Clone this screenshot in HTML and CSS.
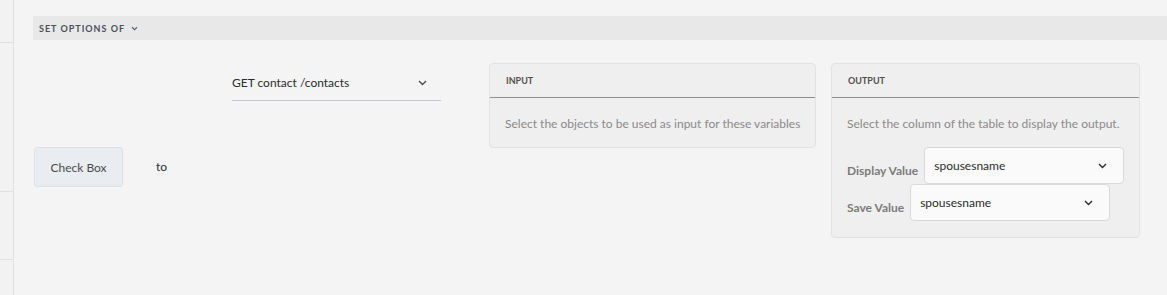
FILE: index.html
```html
<!DOCTYPE html>
<html lang="en">
<head>
    <meta charset="UTF-8">
    <title>Set Options</title>
    <link rel="stylesheet" href="styles.css">
</head>
<body>

<div class="page">
    <div class="rail">
        <div class="rail-item r1"></div>
        <div class="rail-item r2"></div>
        <div class="rail-item r3"></div>
    </div>

    <div class="main">
        <div class="section-bar">
            <span class="section-title">SET OPTIONS OF</span>
            <svg class="chev-sm" width="7" height="5" viewBox="0 0 7 5"><path d="M1 1.2 L3.5 3.6 L6 1.2" fill="none" stroke="#5a6270" stroke-width="1.2"/></svg>
        </div>

        <div class="options-row">
            <div class="target">
                <button class="field-btn">Check Box</button>
                <span class="to">to</span>
            </div>

            <div class="service">
                <div class="line-select">
                    <span>GET contact /contacts</span>
                    <svg width="9" height="6" viewBox="0 0 9 6"><path d="M1 1 L4.5 4.5 L8 1" fill="none" stroke="#4b4b4b" stroke-width="1.4"/></svg>
                </div>
            </div>

            <div class="panel panel-input">
                <div class="panel-head">INPUT</div>
                <div class="panel-body">
                    <p class="hint">Select the objects to be used as input for these variables</p>
                </div>
            </div>

            <div class="panel panel-output">
                <div class="panel-head">OUTPUT</div>
                <div class="panel-body">
                    <p class="hint">Select the column of the table to display the output.</p>
                    <div class="field">
                        <label>Display Value</label>
                        <div class="box-select">
                            <span>spousesname</span>
                            <svg width="9" height="6" viewBox="0 0 9 6"><path d="M1 1 L4.5 4.5 L8 1" fill="none" stroke="#2c2c2c" stroke-width="1.4"/></svg>
                        </div>
                    </div>
                    <div class="field">
                        <label>Save Value</label>
                        <div class="box-select">
                            <span>spousesname</span>
                            <svg width="9" height="6" viewBox="0 0 9 6"><path d="M1 1 L4.5 4.5 L8 1" fill="none" stroke="#2c2c2c" stroke-width="1.4"/></svg>
                        </div>
                    </div>
                </div>
            </div>
        </div>
    </div>
</div>

</body>
</html>
```

FILE: styles.css
```css
body {
    margin: 0;
    padding: 0;
    background-color: #f4f4f4;
    font-family: "Lato", "Open Sans", sans-serif;
    color: #2c2c2c;
}
.page {
    display: flex;
    height: 295px;
    overflow: hidden;
}
.rail {
    width: 13px;
    flex-shrink: 0;
    border-right: 1px solid #e1e1e1;
    background-color: #f2f2f2;
}
.rail-item {
    border-bottom: 1px solid #e0e0e0;
}
.r1 { height: 42px; }
.r2 { height: 148px; }
.r3 { height: 67px; }
.main {
    flex: 1;
    padding: 16px 0 0 19px;
}
.section-bar {
    height: 24px;
    background-color: #e8e8e8;
    display: flex;
    align-items: center;
    padding-left: 6px;
}
.section-title {
    font-size: 9px;
    font-weight: bold;
    letter-spacing: 1px;
    color: #4a505c;
}
.chev-sm {
    margin-left: 6px;
}
.options-row {
    display: flex;
    align-items: flex-start;
    padding-top: 23px;
    padding-left: 1px;
}
.target {
    display: flex;
    align-items: center;
    margin-top: 84px;
    width: 198px;
    flex-shrink: 0;
}
.field-btn {
    width: 89px;
    height: 40px;
    font-family: inherit;
    font-size: 12px;
    color: #4b4b4b;
    background-color: #e9ecf0;
    border: 1px solid #dde0e5;
    border-radius: 3px;
    padding: 0;
}
.to {
    margin-left: 33px;
    font-size: 12px;
    color: #2c2c2c;
    margin-top: -2px;
}
.service {
    width: 209px;
    margin-top: 5px;
    margin-right: 48px;
    flex-shrink: 0;
}
.line-select {
    height: 33px;
    display: flex;
    align-items: center;
    justify-content: space-between;
    border-bottom: 1px solid #c4c7ce;
    font-size: 12px;
    color: #2c2c2c;
    padding-right: 14px;
    padding-bottom: 3px;
    box-sizing: border-box;
}
.panel {
    background-color: #efefef;
    border: 1px solid #e2e2e2;
    border-radius: 4px;
    flex-shrink: 0;
}
.panel-input {
    width: 325px;
    height: 83px;
    margin-right: 15px;
}
.panel-output {
    width: 307px;
    height: 173px;
}
.panel-head {
    height: 33px;
    line-height: 33px;
    padding-left: 16px;
    font-size: 9px;
    font-weight: bold;
    color: #505050;
    border-bottom: 1px solid #8f8f8f;
}
.panel-body {
    padding: 0 15px;
}
.hint {
    margin: 0;
    padding-top: 18px;
    font-size: 12px;
    color: #8a8a8a;
    white-space: nowrap;
}
.field {
    display: flex;
    align-items: flex-end;
}
.field:first-of-type {
    margin-top: 16px;
}
.field label {
    font-size: 12px;
    font-weight: bold;
    color: #7b7b7b;
    padding-bottom: 6px;
    margin-right: 6px;
    white-space: nowrap;
}
.box-select {
    width: 173px;
    height: 35px;
    flex-shrink: 0;
    display: flex;
    align-items: center;
    justify-content: space-between;
    background-color: #fafafa;
    border: 1px solid #d9d9d9;
    border-radius: 4px;
    padding: 0 16px 0 9px;
    font-size: 12px;
    color: #2c2c2c;
}
```
